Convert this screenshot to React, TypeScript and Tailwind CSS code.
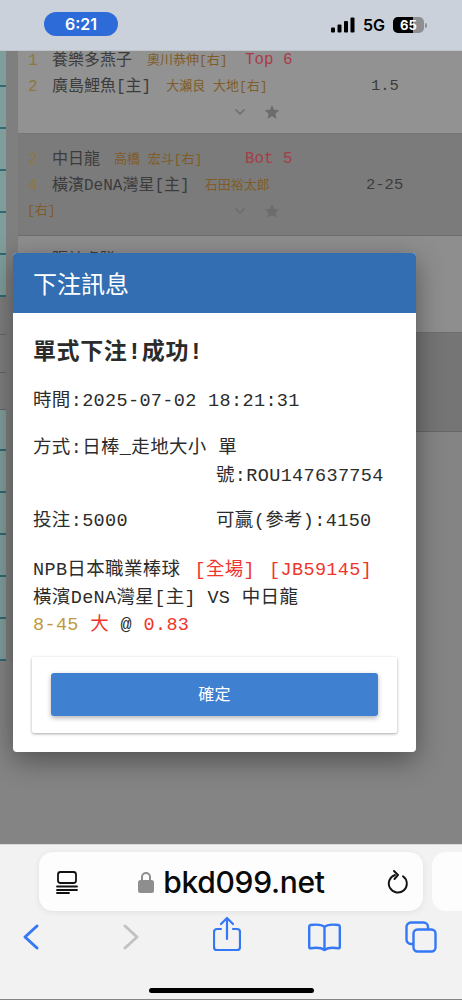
const mono = "font-['Liberation_Mono','Noto_Sans_CJK_TC',monospace]";

const stripSegments = [
  { h: "h-[36px]", teal: true }, { h: "h-[42px]", teal: true }, { h: "h-[42px]", teal: true },
  { h: "h-[42px]", teal: true }, { h: "h-[42px]", teal: true }, { h: "h-[42px]", teal: true },
  { h: "h-[38px]", teal: false }, { h: "h-[38px]", teal: false }, { h: "h-[37px]", teal: false },
  { h: "h-[41px]", teal: true }, { h: "h-[42px]", teal: true }, { h: "h-[42px]", teal: true },
  { h: "h-[42px]", teal: true }, { h: "h-[42px]", teal: true }, { h: "h-[42px]", teal: true },
];

function Actions({ children }: { children?: React.ReactNode }) {
  return (
    <div className="-mt-px flex h-[18px] items-center">
      <div className="w-[208px] pl-[9px] text-[13px] text-[#7f5c28]">{children}</div>
      <svg width="14" height="10" viewBox="0 0 14 10" className="ml-[7px]" fill="none" stroke="#6a6a6a" strokeWidth="1.4">
        <path d="M2.5 2.5 7 7l4.5-4.5" />
      </svg>
      <svg width="16" height="16" viewBox="0 0 24 24" className="ml-[17px]" fill="#6c6c6c">
        <path d="M12 1.5l3.2 7.1 7.6.8-5.7 5.1 1.6 7.6L12 18.3l-6.7 3.8 1.6-7.6-5.7-5.1 7.6-.8z" />
      </svg>
    </div>
  );
}

function MatchLine({ no, team, player, playerClass, extra, odds, oddsClass }: {
  no: string; team: string; player?: string; playerClass?: string; extra?: string; odds?: string; oddsClass?: string;
}) {
  return (
    <div className="flex h-[18px] items-center whitespace-nowrap pl-[10px]">
      <span className="w-[24px] text-[16px] text-[#8a7940]">{no}</span>
      <span className="text-[16px] text-[#3c3c3c]">{team}</span>
      {player && <span className={`text-[13px] text-[#7f5c28] ${playerClass}`}>{player}</span>}
      {extra && <span className="absolute left-[227px] text-[15.8px] text-[#a83c48]">{extra}</span>}
      {odds && <span className={`absolute text-[15.5px] text-[#3c3c3c] ${oddsClass}`}>{odds}</span>}
    </div>
  );
}

function Background() {
  return (
    <div className="flex h-[793px] items-start bg-[#848484]">
      <div className="flex shrink-0">
        <div className="w-[6px]">
          {stripSegments.map((seg, i) => (
            <div key={i} className={`${seg.h} ${seg.teal ? "border-b-2 border-[#2f6b72] bg-[#7f9d9a]" : "border-b border-[#666] bg-[#7e7e7e]"}`} />
          ))}
        </div>
        <div className="w-[12px] bg-[#7f7f7f]" />
      </div>
      <div className={`min-w-0 flex-1 ${mono}`}>
        <div className="relative flex h-[83px] flex-col gap-2 border-b border-[#767676] bg-[#929292] pt-px">
          <MatchLine no="1" team="養樂多燕子" player="奧川恭伸[右]" playerClass="ml-[15px]" extra="Top 6" />
          <MatchLine no="2" team="廣島鯉魚[主]" player="大瀨良 大地[右]" playerClass="ml-[15px]" odds="1.5" oddsClass="left-[353px]" />
          <Actions />
        </div>
        <div className="relative flex h-[102px] flex-col gap-2 border-b border-[#6e6e6e] bg-[#7b7b7b] pt-[17px]">
          <MatchLine no="2" team="中日龍" player="高橋 宏斗[右]" playerClass="ml-[14px]" extra="Bot 5" />
          <MatchLine no="4" team="橫濱DeNA灣星[主]" player="石田裕太郎" playerClass="ml-[15px]" odds="2-25" oddsClass="left-[348px]" />
          <Actions>[右]</Actions>
        </div>
        <div className="h-[97px] border-b border-[#6e6e6e] bg-[#8e8e8e] pt-[15px]">
          {/* only the top sliver of this row shows above the dialog */}
          <div className="h-[2px] overflow-hidden">
            <MatchLine no="" team="阪神虎隊" />
          </div>
        </div>
        <div className="h-[99px] border-b border-[#666] bg-[#757575]" />
      </div>
    </div>
  );
}

function Modal() {
  return (
    <div className={`absolute left-[13px] top-[253px] w-[403px] overflow-hidden rounded-[4px] bg-white shadow-[0_8px_28px_rgba(0,0,0,0.4)] ${mono}`}>
      <div className="flex h-[60px] items-center bg-[#336eb2] pl-[20px] font-['Noto_Sans_CJK_TC',sans-serif] text-[24px] text-white">
        下注訊息
      </div>
      <div className="px-[20px] pb-[19px] pt-[22px] text-[18.5px] tracking-[0.35px] text-[#2c2c2c]">
        <div className="h-[36px] text-[23px] font-bold leading-[36px] tracking-[0.6px] text-[#2b2b2b]">單式下注!成功!</div>
        <div className="mt-[17px] h-[28px] leading-[28px]">時間:2025-07-02 18:21:31</div>
        <div className="mt-[19px] grid h-[56px] grid-cols-[183px_1fr] leading-[28px]">
          <div className="col-span-2">方式:日棒_走地大小 單</div>
          <div />
          <div className="whitespace-nowrap">號:ROU147637754</div>
        </div>
        <div className="mt-[17px] grid h-[28px] grid-cols-[183px_1fr] leading-[28px]">
          <div>投注:5000</div>
          <div className="whitespace-nowrap">可贏(參考):4150</div>
        </div>
        <div className="mt-[21px] leading-[27.5px]">
          <div className="flex whitespace-nowrap">
            <span>NPB日本職業棒球</span>
            <span className="ml-[14px] text-[#f0352b]">[全場]</span>
            <span className="ml-[14px] text-[#f0352b]">[JB59145]</span>
          </div>
          <div className="whitespace-nowrap">橫濱DeNA灣星[主] VS 中日龍</div>
          <div className="whitespace-nowrap">
            <span className="text-[#c0983f]">8-45</span> <span className="text-[#f0352b]">大</span> @ <span className="text-[#f0352b]">0.83</span>
          </div>
        </div>
        <div className="-mx-px mt-[17px] rounded-[2px] bg-white px-[19px] pb-[17px] pt-[16px] shadow-[0_1px_3px_rgba(0,0,0,0.35)]">
          <button className="flex h-[43px] w-full items-center justify-center rounded-[3px] bg-[#4080d0] pb-[3px] font-['Noto_Sans_CJK_TC',sans-serif] text-[16px] text-white shadow-[0_2px_5px_rgba(0,0,0,0.3)]">
            確定
          </button>
        </div>
      </div>
    </div>
  );
}

function BrowserBar() {
  return (
    <div className="h-[155px] border-t border-[#dcdcdc] bg-[#f2f2f2]">
      <div className="box-content flex h-[59px] gap-[9px] pt-[7px]">
        <div className="relative ml-[39px] flex h-[59px] w-[384px] shrink-0 items-center justify-center rounded-[14px] bg-[#fdfdfd] shadow-[0_1px_6px_rgba(0,0,0,0.08)]">
          <svg className="absolute left-[16px]" width="24" height="24" viewBox="0 0 24 24" fill="none" stroke="#111" strokeWidth="1.8" strokeLinecap="round">
            <rect x="3" y="2" width="18" height="11" rx="2.5" />
            <path d="M2 16.5h20M2 20h20M2 23h12" />
          </svg>
          <svg className="mr-[8px]" width="18" height="24" viewBox="0 0 18 24" fill="#8e8e8e">
            <path d="M4 10V7a5 5 0 0 1 10 0v3h-2V7a3 3 0 0 0-6 0v3z" />
            <rect x="1" y="10" width="16" height="13" rx="2.5" />
          </svg>
          <span className="font-['Inter',sans-serif] text-[30px] font-medium leading-none tracking-[-0.3px] text-[#0a0a0a]">bkd099.net</span>
          <svg className="absolute right-[14px]" width="22" height="24" viewBox="0 0 22 24" fill="none" stroke="#111" strokeWidth="1.9" strokeLinecap="round" strokeLinejoin="round">
            <path d="M8 5a9 9 0 1 0 8 1.2" />
            <path d="M7 1l4 4-3.5 4" />
          </svg>
        </div>
        <div className="h-[59px] flex-1 rounded-l-[14px] bg-[#fdfdfd]" />
      </div>
      <div className="relative mt-[8px] h-[44px]">
        <svg className="absolute left-[22px] top-[4px]" width="18" height="28" viewBox="0 0 18 28" fill="none" stroke="#3478f6" strokeWidth="3" strokeLinecap="round" strokeLinejoin="round">
          <path d="M15 3 3 14l12 11" />
        </svg>
        <svg className="absolute left-[122px] top-[4px]" width="18" height="28" viewBox="0 0 18 28" fill="none" stroke="#c2c2c2" strokeWidth="3" strokeLinecap="round" strokeLinejoin="round">
          <path d="M3 3l12 11L3 25" />
        </svg>
        <svg className="absolute left-[213px] top-[-3px]" width="28" height="36" viewBox="0 0 28 36" fill="none" stroke="#3478f6" strokeWidth="2.2" strokeLinecap="round" strokeLinejoin="round">
          <path d="M8 13H4a3 3 0 0 0-3 3v15a3 3 0 0 0 3 3h20a3 3 0 0 0 3-3V16a3 3 0 0 0-3-3h-4" />
          <path d="M14 23V2M8 8l6-6 6 6" />
        </svg>
        <svg className="absolute left-[308px] top-[3px]" width="33" height="30" viewBox="0 0 33 30" fill="none" stroke="#3478f6" strokeWidth="2.4" strokeLinecap="round" strokeLinejoin="round">
          <path d="M16.5 5C14 2.5 10 2 2.5 3c-1 .2-1.3.8-1.3 1.7V25c0 1 .6 1.4 1.5 1.3 6-1 10.5-.8 13.8 1.7 3.3-2.5 7.8-2.7 13.8-1.7.9.1 1.5-.3 1.5-1.3V4.7c0-.9-.3-1.5-1.3-1.7C23 2 19 2.5 16.5 5zM16.5 5v22" />
        </svg>
        <svg className="absolute left-[405px] top-[2px]" width="32" height="32" viewBox="0 0 32 32" fill="none" stroke="#3478f6" strokeWidth="2.4" strokeLinejoin="round">
          <rect x="8.5" y="8.5" width="22" height="22" rx="4" />
          <path d="M8.5 23H6a4.5 4.5 0 0 1-4.5-4.5V6A4.5 4.5 0 0 1 6 1.5h12.5A4.5 4.5 0 0 1 23 6v2.5" />
        </svg>
      </div>
      <div className="ml-[149px] mt-[25px] h-[5px] w-[165px] rounded-full bg-black" />
    </div>
  );
}

export default function App() {
  return (
    <div className="relative h-[1000px] w-[462px] overflow-hidden bg-[#848484]">
      <div className="flex h-[51px] items-center justify-between border-b border-[#bfc4cc] bg-[#cbd1da] pl-[44px] pr-[35px]">
        <div className="mb-[2px] flex h-[24px] w-[74px] items-center justify-center rounded-full bg-[#2d6bd8] font-['Inter',sans-serif] text-[16px] font-semibold text-white">
          6:21
        </div>
        <div className="flex items-center font-['Inter',sans-serif]">
          <svg width="24" height="16" viewBox="0 0 24 16" fill="#000">
            <rect x="0" y="10.5" width="4" height="5" rx="1" />
            <rect x="6.5" y="7.5" width="4" height="8" rx="1" />
            <rect x="13" y="4" width="4" height="11.5" rx="1" />
            <rect x="19.5" y="0.5" width="4" height="15" rx="1" />
          </svg>
          <span className="ml-[8px] text-[16px] font-semibold text-black">5G</span>
          <div className="relative ml-[8px] flex h-[16px] w-[31px] items-center overflow-hidden rounded-[5px] bg-[#8d8f93]">
            <div className="absolute inset-y-0 left-0 w-[20px] bg-black" />
            <span className="relative w-full text-center text-[13px] font-bold leading-none text-white">65</span>
          </div>
          <div className="ml-[1px] h-[5px] w-[2px] rounded-r-full bg-[#8d8f93]" />
        </div>
      </div>
      <Background />
      <Modal />
      <BrowserBar />
    </div>
  );
}
